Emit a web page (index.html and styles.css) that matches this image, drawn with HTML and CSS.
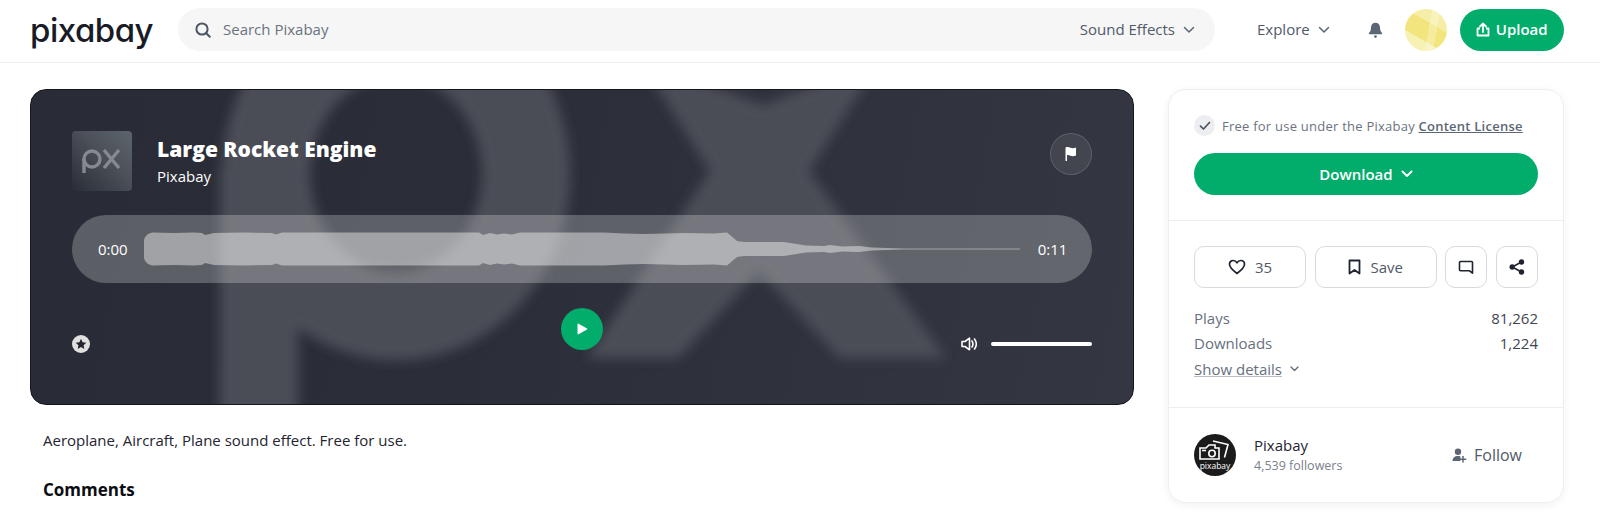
FILE: index.html
```html
<!DOCTYPE html>
<html lang="en">
<head>
  <meta charset="UTF-8">
  <meta name="viewport" content="width=device-width, initial-scale=1.0">
  <title>Large Rocket Engine</title>
  <link rel="stylesheet" href="styles.css">
</head>
<body>

  <!-- Top navigation -->
  <header class="topbar">
    <a class="logo">pixabay</a>
    <div class="search">
      <svg class="search-icon" width="18" height="18" viewBox="0 0 18 18"><circle cx="8" cy="8" r="5.6" fill="none" stroke="#4b5563" stroke-width="2"/><path d="M12.2 12.2l3.6 3.6" stroke="#4b5563" stroke-width="2" stroke-linecap="round"/></svg>
      <span class="search-text">Search Pixabay</span>
      <span class="search-type">Sound Effects</span>
      <svg class="chev" width="12" height="8" viewBox="0 0 12 8"><path d="M1.500 1.500L6 6l4.500-4.500" fill="none" stroke="#5c6674" stroke-width="1.500" stroke-linecap="round" stroke-linejoin="round"/></svg>
    </div>
    <a class="explore">Explore</a>
    <svg class="chev" width="12" height="8" viewBox="0 0 12 8"><path d="M1.500 1.500L6 6l4.500-4.500" fill="none" stroke="#5c6674" stroke-width="1.500" stroke-linecap="round" stroke-linejoin="round"/></svg>
    <svg class="bell" width="15" height="16" viewBox="0 0 15 16"><path d="M7.500 0.800c-2.900 0-4.500 2.100-4.500 4.800 0 3-1 4.300-2 5.500-.4.500-.2 1.200.5 1.200h12c.7 0 .9-.7.5-1.200-1-1.200-2-2.500-2-5.500 0-2.700-1.600-4.800-4.500-4.800z" fill="#5c6674"/><circle cx="7.500" cy="14.600" r="1.300" fill="#5c6674"/></svg>
    <div class="avatar"></div>
    <a class="upload">
      <svg width="14" height="15" viewBox="0 0 14 15"><path d="M7 10V2M4 4.500L7 1.500l3 3" fill="none" stroke="#fff" stroke-width="1.800" stroke-linecap="round" stroke-linejoin="round"/><path d="M4 6.500H1.500v7h11v-7H10" fill="none" stroke="#fff" stroke-width="1.800" stroke-linejoin="round"/></svg>
      <span class="upload-text">Upload</span>
    </a>
  </header>

  <div class="page">
    <main class="content">

      <!-- Audio player -->
      <section class="player">
        <svg class="player-bg" width="1102" height="314" viewBox="31 90 1102 314">
          <defs><filter id="soft" x="-10%" y="-10%" width="120%" height="120%"><feGaussianBlur stdDeviation="6"/></filter></defs>
          <g filter="url(#soft)">
            <ellipse cx="396" cy="174" rx="130" ry="142" fill="none" stroke="#4c4e57" stroke-width="88"/>
            <path d="M259 170V430" fill="none" stroke="#4c4e57" stroke-width="78"/>
            <path d="M640 60L763 105 880 60 809 171 946 358H840L759 271 678 358H587L710 171Z" fill="#4c4e57"/>
          </g>
        </svg>

        <div class="player-top">
          <div class="thumb">
            <svg width="60" height="60" viewBox="0 0 60 60"><g fill="none" stroke="#868a90" stroke-width="3.400"><circle cx="20" cy="28" r="8"/><path d="M12 28v14"/><path d="M32 19l15 18M47 19L32 37"/></g></svg>
          </div>
          <div class="track">
            <h1 class="track-title">Large Rocket Engine</h1>
            <div class="track-author">Pixabay</div>
          </div>
          <button class="flag-btn">
            <svg width="14" height="16" viewBox="0 0 14 16"><path d="M1.500 1.500c2-.8 3.500-.3 5 .2s3 .7 5.500-.2v8c-2.500.9-4 .7-5.500.2s-3-1-3.500-.4V15H1.500z" fill="#fff"/></svg>
          </button>
        </div>

        <div class="wave-bar">
          <span class="time">0:00</span>
          <svg class="wave" width="876" height="34" viewBox="0 0 876 34"><path d="M0 8L1 5 4 2 8 .5 30 1 50 .5 58 1 61 3 70 1 100 .5 128 1 132 2.500 138 .5 335 .5 339 3 346 1 353 2.500 360 1.500 368 2.500 376 .5 460 .5 480 1.500 500 2 540 1 570 1.500 583 .5 593 9 600 10 640 10 662 13.500 680 14 686 13 698 14.500 715 14 728 15.500 760 16.400 876 16.500 876 17.500 760 17.600 728 18.500 715 20 698 19.500 686 21 680 20 662 20.500 640 24 600 24 593 25 583 33.500 570 32.500 540 33 500 32 480 32.500 460 33.500 376 33.500 368 31.500 360 32.500 353 31.500 346 33 339 31 335 33.500 138 33.500 132 31.500 128 33 100 33.500 70 33 61 31 58 33 50 33.500 30 33 8 33.500 4 32 1 29 0 26Z" fill="#fff" fill-opacity=".42"/></svg>
          <span class="time">0:11</span>
        </div>

        <div class="player-controls">
          <div class="star-btn">
            <svg width="12" height="12" viewBox="0 0 12 12"><path d="M6 .8l1.600 3.400 3.700.5-2.700 2.500.7 3.700L6 9.100l-3.300 1.800.7-3.700L.7 4.700l3.700-.5z" fill="#22252e"/></svg>
          </div>
          <button class="play-btn">
            <svg width="12" height="12" viewBox="0 0 12 12"><path d="M1.500 1.200c0-.5.5-.8 1-.5l8.500 4.800c.4.200.4.800 0 1L2.500 11.300c-.5.300-1 0-1-.5z" fill="#fff"/></svg>
          </button>
          <div class="volume">
            <svg width="17" height="14" viewBox="0 0 17 14"><path d="M1 4.500h3L8.500 1.200v11.600L4 9.500H1z" fill="none" stroke="#fff" stroke-width="1.600" stroke-linejoin="round"/><path d="M11 4c1.200 1.800 1.200 4.200 0 6M13.500 2c2.200 3 2.200 7 0 10" fill="none" stroke="#fff" stroke-width="1.600" stroke-linecap="round"/></svg>
            <div class="volume-line"></div>
          </div>
        </div>
      </section>

      <div class="description">
        <p class="desc-text">Aeroplane, Aircraft, Plane sound effect. Free for use.</p>
        <h2 class="comments-title">Comments</h2>
      </div>
    </main>

    <!-- Right column -->
    <aside class="side-card">
      <div class="side-section download-section">
        <div class="license">
          <span class="license-check">
            <svg width="12" height="10" viewBox="0 0 12 10"><path d="M1.500 5.200L4.500 8l6-6.500" fill="none" stroke="#4b5563" stroke-width="1.700" stroke-linecap="round" stroke-linejoin="round"/></svg>
          </span>
          <span>Free for use under the Pixabay <a class="license-link">Content License</a></span>
        </div>
        <a class="download-btn">
          Download
          <svg width="12" height="8" viewBox="0 0 12 8"><path d="M1.500 1.500L6 6l4.500-4.500" fill="none" stroke="#fff" stroke-width="2" stroke-linecap="round" stroke-linejoin="round"/></svg>
        </a>
      </div>

      <div class="side-section stats-section">
        <div class="actions">
          <button class="action action-like">
            <svg width="18" height="16" viewBox="0 0 18 16"><path d="M9 14.500C5 11.500 1.500 8.700 1.500 5.300 1.500 3 3.200 1.500 5.200 1.500c1.600 0 3 .8 3.800 2.300.8-1.500 2.200-2.300 3.800-2.300 2 0 3.700 1.500 3.700 3.800 0 3.400-3.500 6.200-7.500 9.200z" fill="none" stroke="#1f2430" stroke-width="1.700" stroke-linejoin="round"/></svg>
            35
          </button>
          <button class="action action-save">
            <svg width="13" height="16" viewBox="0 0 13 16"><path d="M1.500 1.500h10v13l-5-3.500-5 3.500z" fill="none" stroke="#1f2430" stroke-width="1.800" stroke-linejoin="round"/></svg>
            Save
          </button>
          <button class="action action-comment">
            <svg width="16" height="15" viewBox="0 0 16 15"><path d="M2.500 1.500h11c.6 0 1 .4 1 1v10.700l-3-2.400h-9c-.6 0-1-.4-1-1V2.500c0-.6.400-1 1-1z" fill="none" stroke="#1f2430" stroke-width="1.600" stroke-linejoin="round"/></svg>
          </button>
          <button class="action action-share">
            <svg width="16" height="16" viewBox="0 0 16 16"><circle cx="12.500" cy="3" r="2.700" fill="#1f2430"/><circle cx="3.200" cy="8" r="2.700" fill="#1f2430"/><circle cx="12.500" cy="13" r="2.700" fill="#1f2430"/><path d="M12.500 3L3.200 8l9.300 5" fill="none" stroke="#1f2430" stroke-width="1.600"/></svg>
          </button>
        </div>
        <div class="stat-row"><span>Plays</span><span class="stat-value">81,262</span></div>
        <div class="stat-row"><span>Downloads</span><span class="stat-value">1,224</span></div>
        <div class="details-row">
          <a class="details-link">Show details</a>
          <svg width="9" height="6" viewBox="0 0 9 6"><path d="M1 1l3.500 3.500L8 1" fill="none" stroke="#5c6674" stroke-width="1.300" stroke-linecap="round" stroke-linejoin="round"/></svg>
        </div>
      </div>

      <div class="side-section author">
        <svg class="author-pic" width="42" height="42" viewBox="0 0 42 42">
          <circle cx="21" cy="21" r="21" fill="#1b1b1b"/>
          <path d="M19 7l15 3.500-3.500 13" fill="none" stroke="#fff" stroke-width="1.600"/>
          <path d="M6 14h6l3-3h6v3h4v11H6z" fill="#1b1b1b" stroke="#fff" stroke-width="1.600"/>
          <circle cx="18" cy="19.500" r="3.200" fill="none" stroke="#fff" stroke-width="1.600"/>
          <path d="M8 16.500h4" stroke="#fff" stroke-width="1.600"/>
          <text class="author-pic-text" x="21" y="35" text-anchor="middle">pixabay</text>
        </svg>
        <div class="author-info">
          <div class="author-name">Pixabay</div>
          <div class="author-followers">4,539 followers</div>
        </div>
        <a class="follow">
          <svg width="15" height="15" viewBox="0 0 15 15"><circle cx="6" cy="3.800" r="3.200" fill="#5c6674"/><path d="M.5 13c0-3 2-5 5.500-5 1 0 1.700.2 2.400.4V13z" fill="#5c6674"/><path d="M11 8v6.500M7.800 11.200h6.500" stroke="#5c6674" stroke-width="1.500"/></svg>
          Follow
        </a>
      </div>
    </aside>
  </div>

</body>
</html>
```

FILE: styles.css
```css
* {
  box-sizing: border-box;
}
html, body {
  height: 514px;
  overflow: hidden;
}
body {
  margin: 0;
  font-family: "Open Sans", "Noto Sans", sans-serif;
  font-size: 15px;
  color: #1f2430;
  background: #fff;
}
button {
  font-family: inherit;
  cursor: pointer;
}

/* top bar */
.topbar {
  display: flex;
  align-items: center;
  height: 63px;
  padding: 0 36px 3px 30px;
  border-bottom: 1px solid #f1f1f2;
}
.logo {
  width: 148px;
  font-family: Inter, sans-serif;
  font-feature-settings: "cv11";
  font-size: 33px;
  font-weight: 500;
  line-height: 42px;
  letter-spacing: -0.5px;
  color: #191b26;
}
.search {
  display: flex;
  align-items: center;
  flex: none;
  width: 1037px;
  height: 43px;
  padding: 0 20px 0 16px;
  border-radius: 22px;
  background: #f6f6f6;
}
.search-text {
  flex: 1;
  margin-left: 11px;
  padding-bottom: 2px;
  color: #6b7380;
}
.search-type {
  margin-right: 8px;
  padding-bottom: 2px;
  color: #505a69;
}
.explore {
  margin-left: 42px;
  margin-right: 8px;
  padding-bottom: 2px;
  color: #505a69;
}
.bell {
  margin-left: 38px;
}
.avatar {
  width: 42px;
  height: 42px;
  margin-left: 22px;
  border-radius: 50%;
  background:
    linear-gradient(100deg, transparent 55%, rgba(255, 255, 255, 0.25) 55% 72%, transparent 72%),
    linear-gradient(30deg, #f8f1b4 32%, #f3e57e 32% 64%, #f6eea6 64%);
}
.upload {
  display: flex;
  align-items: center;
  justify-content: center;
  gap: 6px;
  width: 104px;
  height: 42px;
  margin-left: 13px;
  border-radius: 21px;
  background: #02ac6b;
  color: #fff;
  font-weight: 600;
}
.upload-text {
  padding-bottom: 2px;
}

/* page columns */
.page {
  display: flex;
  gap: 34px;
  padding: 26px 36px 0 30px;
}
.content {
  width: 1104px;
  flex: none;
}
.side-card {
  width: 396px;
  flex: none;
  border: 1px solid #eceef0;
  border-radius: 18px;
  box-shadow: 0 2px 8px rgba(0, 0, 0, 0.06);
}

/* player */
.player {
  position: relative;
  overflow: hidden;
  padding: 41px 41px 51px;
  border: 1px solid #14161d;
  border-radius: 16px;
  background: linear-gradient(100deg, #292c36 0%, #2b2e38 40%, #343741 100%);
  color: #fff;
}
.player-bg {
  position: absolute;
  left: 0;
  top: 0;
}
.player-top,
.wave-bar,
.player-controls {
  position: relative;
}
.player-top {
  display: flex;
  align-items: center;
  height: 60px;
}
.thumb {
  width: 60px;
  height: 60px;
  border-radius: 4px;
  background: linear-gradient(45deg, #2a2d37 0%, #4b5058 55%, #5d646c 100%);
}
.track {
  flex: 1;
  margin-left: 25px;
}
.track-title {
  margin: 0;
  font-size: 21px;
  line-height: 28px;
  font-weight: 800;
}
.track-author {
  margin-top: 2px;
  font-size: 15px;
  line-height: 22px;
}
.flag-btn {
  display: flex;
  align-items: center;
  justify-content: center;
  width: 42px;
  height: 42px;
  margin-bottom: 15px;
  padding: 0;
  border: 1px solid rgba(255, 255, 255, 0.15);
  border-radius: 50%;
  background: rgba(255, 255, 255, 0.08);
}
.wave-bar {
  display: flex;
  align-items: center;
  gap: 16px;
  height: 68px;
  margin-top: 24px;
  padding: 0 26px;
  border-radius: 34px;
  background: rgba(255, 255, 255, 0.24);
  font-size: 15px;
}
.wave {
  flex: none;
}
.time {
  width: 30px;
}
.time:last-child {
  margin-left: 2px;
}
.player-controls {
  display: grid;
  grid-template-columns: 1fr auto 1fr;
  align-items: end;
  height: 45px;
  margin-top: 25px;
}
.star-btn {
  display: flex;
  align-items: center;
  justify-content: center;
  width: 18px;
  height: 18px;
  border-radius: 50%;
  background: #e0e0e0;
}
.play-btn {
  display: flex;
  align-items: center;
  justify-content: center;
  align-self: start;
  width: 42px;
  height: 42px;
  padding: 0;
  border: none;
  border-radius: 50%;
  background: #02ac6b;
}
.volume {
  display: flex;
  align-items: center;
  justify-content: flex-end;
  gap: 13px;
  height: 18px;
}
.volume-line {
  width: 101px;
  height: 4px;
  border-radius: 2px;
  background: #fff;
}

/* under the player */
.description {
  padding-left: 13px;
}
.desc-text {
  margin: 23px 0 0;
  line-height: 24px;
}
.comments-title {
  margin: 26px 0 0;
  font-size: 17px;
  line-height: 24px;
  font-weight: 700;
  color: #0b0d12;
}

/* right card */
.side-section {
  padding: 0 25px;
}
.side-section + .side-section {
  border-top: 1px solid #eceef0;
}
.download-section {
  padding-top: 25px;
  padding-bottom: 25px;
}
.license {
  display: flex;
  align-items: center;
  gap: 7px;
  height: 21px;
  font-size: 13px;
  letter-spacing: 0.24px;
  color: #6b7380;
}
.license-check {
  display: flex;
  align-items: center;
  justify-content: center;
  width: 21px;
  height: 21px;
  border-radius: 50%;
  background: #eceef1;
}
.license-link {
  font-weight: 600;
  color: #5c6674;
  text-decoration: underline;
}
.download-btn {
  display: flex;
  align-items: center;
  justify-content: center;
  gap: 8px;
  height: 42px;
  margin-top: 17px;
  border-radius: 21px;
  background: #02ac6b;
  color: #fff;
  font-weight: 600;
}
.stats-section {
  padding-top: 25px;
  padding-bottom: 25px;
}
.actions {
  display: flex;
  justify-content: space-between;
  margin-bottom: 18px;
}
.action {
  display: flex;
  align-items: center;
  justify-content: center;
  gap: 9px;
  height: 42px;
  padding: 0;
  border: 1px solid #d8dadd;
  border-radius: 10px;
  background: #fff;
  font-size: 15px;
  color: #505a69;
}
.action-like {
  width: 112px;
}
.action-save {
  width: 122px;
}
.action-comment {
  width: 42px;
}
.action-share {
  width: 42px;
}
.stat-row {
  display: flex;
  justify-content: space-between;
  line-height: 25px;
  color: #677080;
}
.stat-value {
  color: #3f4653;
}
.details-row {
  display: flex;
  align-items: center;
  gap: 8px;
  line-height: 26px;
  color: #677080;
}
.details-link {
  text-decoration: underline;
  text-decoration-color: #b9bdc3;
}
.author {
  display: flex;
  align-items: center;
  padding-top: 26px;
  padding-bottom: 26px;
}
.author-pic-text {
  font-family: "Open Sans", sans-serif;
  font-size: 8.500px;
  fill: #fff;
}
.author-info {
  flex: 1;
  margin-left: 18px;
}
.author-name {
  line-height: 22px;
  color: #1f2430;
}
.author-followers {
  font-size: 12.500px;
  line-height: 20px;
  color: #7a818d;
}
.follow {
  display: flex;
  align-items: center;
  gap: 7px;
  margin-right: 16px;
  font-size: 16px;
  color: #505a69;
}
```
